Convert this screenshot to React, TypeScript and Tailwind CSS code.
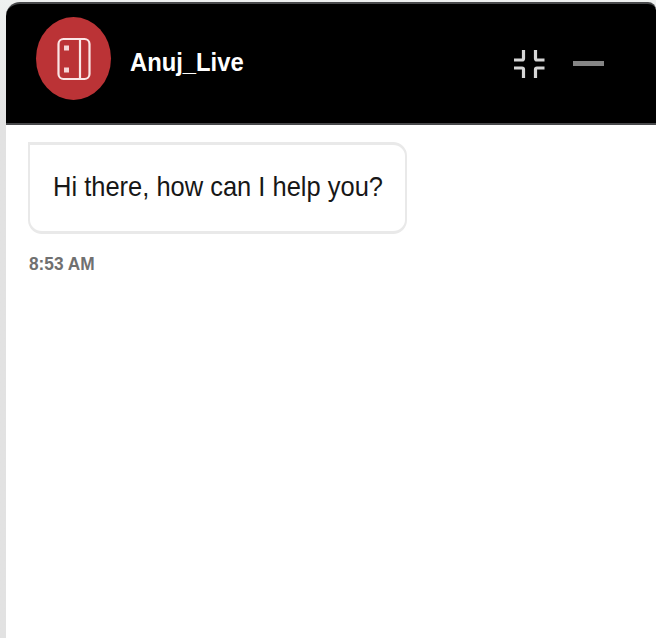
function BotIcon() {
  return (
    <svg viewBox="0 0 34 44" className="h-[44px] w-[34px]" fill="none" stroke="#fbe6e6" strokeWidth="2.2">
      <rect x="1.500" y="2" width="31" height="40" rx="5" />
      <path d="M23 2v40" />
      <rect x="7" y="8.500" width="5" height="5" fill="#f6d5d5" stroke="none" />
      <rect x="7" y="30.500" width="5" height="5" fill="#f6d5d5" stroke="none" />
    </svg>
  );
}

function CollapseIcon() {
  return (
    <svg viewBox="0 0 32 28" className="h-[28px] w-[32px]" fill="none" stroke="#d6d6d6" strokeWidth="3.2">
      <path d="M10.500 0v8.500q0 1.500-1.500 1.500H1M22.500 0v8.500q0 1.500 1.500 1.500H31.500M10.500 28v-8.500q0-1.500-1.500-1.500H1M22.500 28v-8.500q0-1.500 1.500-1.500H31.500" />
    </svg>
  );
}

export default function App() {
  return (
    <div className="flex h-[638px] w-[656px] flex-col overflow-hidden bg-linear-to-b from-[#eff1f0] to-[#e2e2e2] to-[130px] pl-[6px] pt-[2px] font-['Liberation_Sans',Arial,sans-serif]">
      <div className="flex min-h-0 flex-1 flex-col rounded-t-[14px] bg-white">
        <header className="flex h-[123px] shrink-0 items-start rounded-tl-[14px] rounded-tr-[8px] border-y-2 border-[#48494b] bg-black">
          <div className="ml-[30px] mt-[13px] flex h-[83px] w-[75px] items-center justify-center rounded-[50%] bg-[#bb3336]">
            <BotIcon />
          </div>
          <div className="ml-[19px] mt-[42px] w-[116px] whitespace-nowrap text-[26px] font-bold leading-[32px] text-white">
            <span className="inline-block origin-left scale-x-[0.915]">Anuj_Live</span>
          </div>
          <button className="ml-[267px] mt-[46px]" aria-label="Collapse">
            <CollapseIcon />
          </button>
          <button className="ml-[28px] mt-[57px] h-[5px] w-[31px] bg-[#858585]" aria-label="Minimize" />
        </header>
        <main className="flex flex-col items-start pl-[22px] pt-[17px]">
          <div className="h-[92px] w-[379px] rounded-[14px] rounded-tl-none border-x-2 border-y-[3px] border-[#e9e9e9] pl-[23px] pt-[25px] text-[28px] leading-[34px] text-[#171717]">
            <span className="inline-block origin-left scale-x-[0.91] whitespace-nowrap">Hi there, how can I help you?</span>
          </div>
          <div className="ml-px mt-[18px] text-[19px] font-bold leading-[24px] text-[#707070]">
            <span className="inline-block origin-left scale-x-[0.91] whitespace-nowrap">8:53 AM</span>
          </div>
        </main>
      </div>
    </div>
  );
}
